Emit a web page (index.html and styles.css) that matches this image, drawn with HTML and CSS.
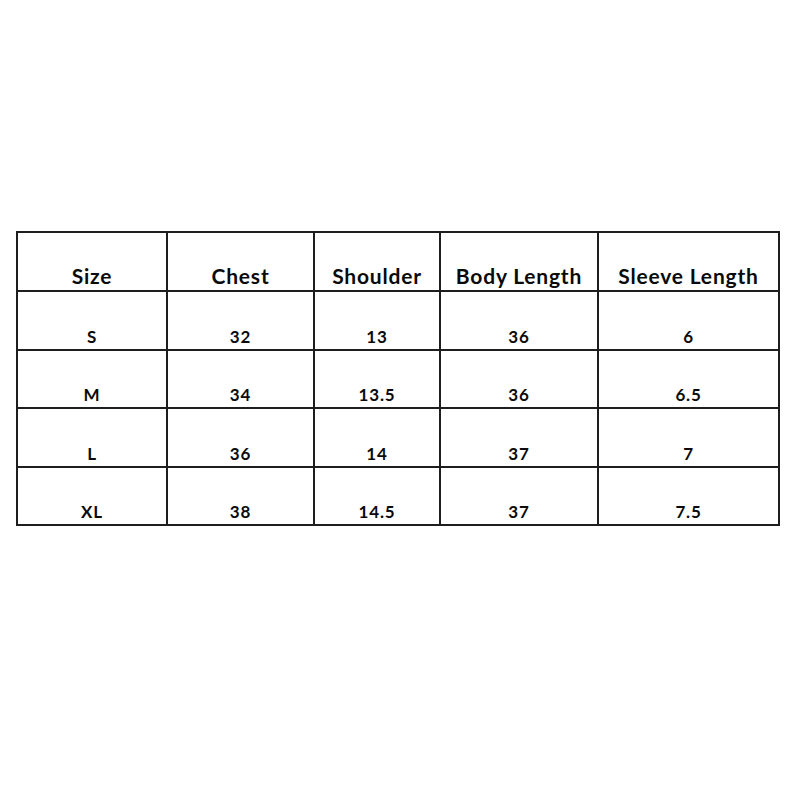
FILE: index.html
```html
<!DOCTYPE html>
<html>
<head>
<meta charset="utf-8">
<link rel="stylesheet" href="styles.css">
</head>
<body>
<div class="page">
<table class="size-table">
  <colgroup>
    <col class="c1"><col class="c2"><col class="c3"><col class="c4"><col class="c5">
  </colgroup>
  <thead>
    <tr class="head"><th>Size</th><th>Chest</th><th>Shoulder</th><th>Body Length</th><th>Sleeve Length</th></tr>
  </thead>
  <tbody>
    <tr><td>S</td><td>32</td><td>13</td><td>36</td><td>6</td></tr>
    <tr><td>M</td><td>34</td><td>13.5</td><td>36</td><td>6.5</td></tr>
    <tr><td>L</td><td>36</td><td>14</td><td>37</td><td>7</td></tr>
    <tr><td>XL</td><td>38</td><td>14.5</td><td>37</td><td>7.5</td></tr>
  </tbody>
</table>
</div>
</body>
</html>
```
FILE: styles.css
```css
html, body { margin: 0; padding: 0; background: #fff; }
.page { padding: 231px 0 0 16px; }
.size-table {
  border-collapse: collapse;
  table-layout: fixed;
  width: 762px;
  font-family: Lato, "Open Sans", sans-serif;
  font-weight: 700;
  color: #0a0a0a;
}
.c1 { width: 150px; }
.c2 { width: 147px; }
.c3 { width: 126px; }
.c4 { width: 158px; }
.c5 { width: 181px; }
.size-table th, .size-table td {
  border: 2px solid #1e1e1e;
  text-align: center;
  vertical-align: bottom;
  padding: 0;
  box-sizing: border-box;
}
.size-table th { font-size: 21px; letter-spacing: 0.8px; height: 59px; padding-bottom: 2px; }
.size-table td { font-size: 17px; letter-spacing: 0.8px; height: 58.5px; padding-bottom: 2px; }
```
